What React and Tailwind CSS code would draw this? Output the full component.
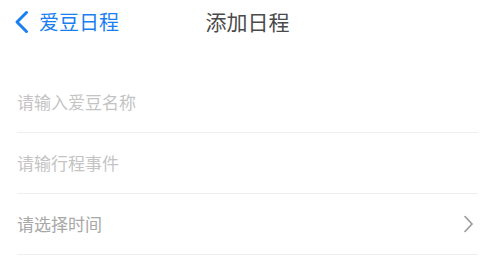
import React from "react";

const font = { fontFamily: '"Noto Sans CJK SC", "Noto Sans", sans-serif' };

const App = () => {
  return (
    <div className="min-h-[259px] w-full bg-white" style={font}>
      <div className="relative flex h-[43px] items-center">
        <button className="flex items-center pl-[14px] text-[#1a7ff0]">
          <svg width="16" height="24" viewBox="0 0 16 24" fill="none">
            <path
              d="M12.5 2.5 L3 12 L12.5 21.5"
              stroke="#1a7ff0"
              strokeWidth="3"
              strokeLinecap="round"
              strokeLinejoin="round"
            />
          </svg>
          <span className="ml-[9px] text-[20px] leading-none">爱豆日程</span>
        </button>
        <h1 className="absolute left-1/2 -translate-x-1/2 text-[21px] leading-none text-[#4a4a4a]">
          添加日程
        </h1>
      </div>

      <div className="mt-[29px]">
        <div className="mx-[17px] flex h-[61px] items-center border-b border-[#eeeeee]">
          <input
            className="w-full bg-transparent text-[17px] outline-none placeholder:text-[#c4c4c4]"
            placeholder="请输入爱豆名称"
          />
        </div>
        <div className="mx-[17px] flex h-[61px] items-center border-b border-[#eeeeee]">
          <input
            className="w-full bg-transparent text-[17px] outline-none placeholder:text-[#c4c4c4]"
            placeholder="请输行程事件"
          />
        </div>
        <div className="mx-[17px] flex h-[61px] items-center justify-between border-b border-[#eeeeee]">
          <span className="text-[17px] text-[#a8a8a8]">请选择时间</span>
          <svg className="mr-[4px]" width="11" height="18" viewBox="0 0 11 18" fill="none">
            <path d="M2 1.5 L9 9 L2 16.5" stroke="#999" strokeWidth="1.6" strokeLinecap="round" />
          </svg>
        </div>
      </div>
    </div>
  );
};

export default App;
